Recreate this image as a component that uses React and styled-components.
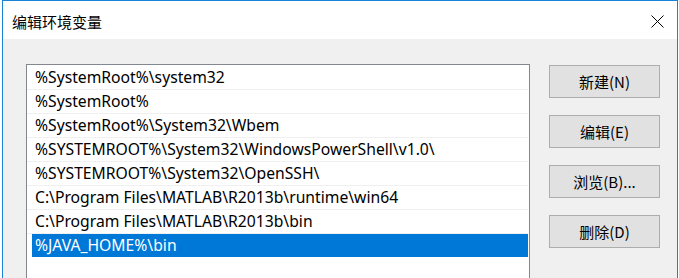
import React from 'react';
import styled, { createGlobalStyle } from 'styled-components';

const GlobalStyle = createGlobalStyle`
    html, body {
        margin: 0;
        padding: 0;
        background: #ffffff;
        overflow: hidden;
    }
    body {
        font-family: "Noto Sans", "Noto Sans CJK SC", sans-serif;
    }
    * {
        box-sizing: border-box;
    }
`;

const paths = [
    "%SystemRoot%\\system32",
    "%SystemRoot%",
    "%SystemRoot%\\System32\\Wbem",
    "%SYSTEMROOT%\\System32\\WindowsPowerShell\\v1.0\\",
    "%SYSTEMROOT%\\System32\\OpenSSH\\",
    "C:\\Program Files\\MATLAB\\R2013b\\runtime\\win64",
    "C:\\Program Files\\MATLAB\\R2013b\\bin",
    "%JAVA_HOME%\\bin",
];

const buttons = ["新建(N)", "编辑(E)", "浏览(B)...", "删除(D)"];

const Page = styled.div`
    padding-left: 2px;
    height: 278px;
`;

const Window = styled.div`
    width: 676px;
    height: 278px;
    border: 1px solid #1883d7;
    border-bottom: none;
    display: flex;
    flex-direction: column;
    overflow: hidden;
`;

const TitleBar = styled.div`
    flex-shrink: 0;
    height: 38px;
    background: #ffffff;
    display: flex;
    align-items: center;
    justify-content: space-between;
    padding: 0 12px 0 9px;
`;

const Title = styled.span`
    font-family: "Noto Sans CJK SC", sans-serif;
    font-size: 15px;
    color: #000;
    margin-top: 2px;
`;

const CloseButton = styled.div`
    width: 13px;
    height: 13px;
    display: flex;
    margin-right: 1px;
    margin-top: 3px;
`;

const Body = styled.div`
    flex: 1;
    min-height: 0;
    background: #f0f0f0;
    display: flex;
    align-items: flex-start;
    padding: 25px 0 0 23px;
    column-gap: 19px;
    overflow: hidden;
`;

const ListBox = styled.div`
    flex-shrink: 0;
    width: 504px;
    height: 240px;
    background: #ffffff;
    border: 1px solid #828790;
    padding-top: 1px;
    display: flex;
    flex-direction: column;
`;

const Row = styled.div`
    flex-shrink: 0;
    height: 24px;
    margin-left: ${p => (p.$selected ? '5px' : '0')};
    padding-left: ${p => (p.$selected ? '3px' : '8px')};
    margin-right: 1px;
    background: ${p => (p.$selected ? '#0078d7' : 'transparent')};
    color: ${p => (p.$selected ? '#ffffff' : '#000000')};
    border-bottom: 1px solid ${p => (p.$selected ? '#ffffff' : '#f0f0f0')};
    font-size: 15.7px;
    line-height: 23px;
    white-space: nowrap;
`;

const ButtonColumn = styled.div`
    flex-shrink: 0;
    display: flex;
    flex-direction: column;
    row-gap: 17px;
    margin-top: 1px;
`;

const Button = styled.div`
    width: 111px;
    height: 33px;
    background: #e1e1e1;
    border: 1px solid #adadad;
    display: flex;
    align-items: center;
    justify-content: center;
    font-family: "Noto Sans CJK SC", sans-serif;
    font-size: 15px;
    color: #000;
`;

export default function App() {
    return (
        <Page>
            <GlobalStyle />
            <Window>
                <TitleBar>
                    <Title>编辑环境变量</Title>
                    <CloseButton>
                        <svg width="13" height="13" viewBox="0 0 13 13">
                            <path d="M0.5 0.5 L12.5 12.5 M12.5 0.5 L0.5 12.5" stroke="#000" strokeWidth="1" />
                        </svg>
                    </CloseButton>
                </TitleBar>
                <Body>
                    <ListBox>
                        {paths.map((path, index) => (
                            <Row key={`path-${index}`} $selected={index === paths.length - 1}>
                                {path}
                            </Row>
                        ))}
                    </ListBox>
                    <ButtonColumn>
                        {buttons.map((label) => (
                            <Button key={label}>{label}</Button>
                        ))}
                    </ButtonColumn>
                </Body>
            </Window>
        </Page>
    );
}
